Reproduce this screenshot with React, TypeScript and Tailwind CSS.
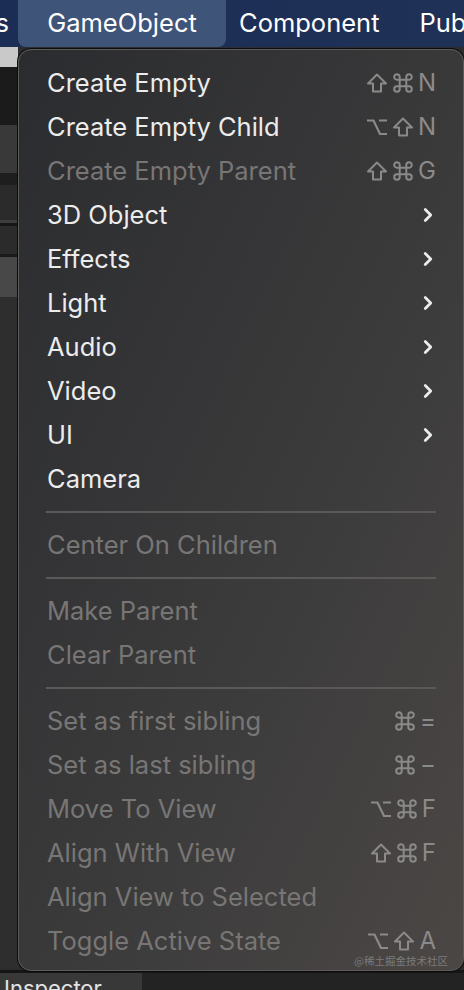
import { ChevronRight } from 'lucide-react';

type Item =
  | { kind: 'sep' }
  | { kind: 'item'; label: string; shortcut?: string[]; submenu?: boolean; disabled?: boolean };

const items: Item[] = [
  { kind: 'item', label: 'Create Empty', shortcut: ['shift', 'cmd', 'N'] },
  { kind: 'item', label: 'Create Empty Child', shortcut: ['opt', 'shift', 'N'] },
  { kind: 'item', label: 'Create Empty Parent', shortcut: ['shift', 'cmd', 'G'], disabled: true },
  { kind: 'item', label: '3D Object', submenu: true },
  { kind: 'item', label: 'Effects', submenu: true },
  { kind: 'item', label: 'Light', submenu: true },
  { kind: 'item', label: 'Audio', submenu: true },
  { kind: 'item', label: 'Video', submenu: true },
  { kind: 'item', label: 'UI', submenu: true },
  { kind: 'item', label: 'Camera' },
  { kind: 'sep' },
  { kind: 'item', label: 'Center On Children', disabled: true },
  { kind: 'sep' },
  { kind: 'item', label: 'Make Parent', disabled: true },
  { kind: 'item', label: 'Clear Parent', disabled: true },
  { kind: 'sep' },
  { kind: 'item', label: 'Set as first sibling', shortcut: ['cmd', '='], disabled: true },
  { kind: 'item', label: 'Set as last sibling', shortcut: ['cmd', '−'], disabled: true },
  { kind: 'item', label: 'Move To View', shortcut: ['opt', 'cmd', 'F'], disabled: true },
  { kind: 'item', label: 'Align With View', shortcut: ['shift', 'cmd', 'F'], disabled: true },
  { kind: 'item', label: 'Align View to Selected', disabled: true },
  { kind: 'item', label: 'Toggle Active State', shortcut: ['opt', 'shift', 'A'], disabled: true },
];

// modifier key glyphs drawn as svg so they match the mac menu size
function KeyGlyph({ k }: { k: string }) {
  if (k === 'shift') {
    return (
      <svg width="22" height="22" viewBox="0 0 22 22" fill="none" stroke="currentColor" strokeWidth="2" strokeLinejoin="round">
        <path d="M11 2.5 L20 11.5 H15 V19.5 H7 V11.5 H2 Z" />
      </svg>
    );
  }
  if (k === 'cmd') {
    return (
      <svg width="22" height="22" viewBox="0 0 20 20" fill="none" stroke="currentColor" strokeWidth="1.8">
        <path d="M7 7 V4.5 A2.5 2.5 0 1 0 4.5 7 H15.5 A2.5 2.5 0 1 0 13 4.5 V15.5 A2.5 2.5 0 1 0 15.5 13 H4.5 A2.5 2.5 0 1 0 7 15.5 Z" />
      </svg>
    );
  }
  if (k === 'opt') {
    return (
      <svg width="22" height="22" viewBox="0 0 22 22" fill="none" stroke="currentColor" strokeWidth="2.2">
        <path d="M1 4.5 H7.5 L14 18 H21 M13 4.5 H21" />
      </svg>
    );
  }
  return <span className="text-[24px] leading-none">{k}</span>;
}

export default function App() {
  return (
    <div className="relative h-[990px] w-[464px] overflow-hidden bg-[#2c2c2c] font-['Inter',sans-serif]">
      {/* top menu bar */}
      <div className="flex h-[47px] items-center overflow-hidden whitespace-nowrap bg-linear-to-r from-[#1c2d55] to-[#1f3157] text-[25.5px] text-white">
        <span className="flex w-[18px] shrink-0 justify-end pr-[9px]">s</span>
        <div className="flex h-full w-[208px] shrink-0 items-center justify-center rounded-b-[8px] bg-[#3f5479]">GameObject</div>
        <span className="ml-[13px] shrink-0">Component</span>
        <span className="ml-[40px] shrink-0">Pub</span>
      </div>

      {/* left editor strip behind menu */}
      <div className="flex w-[18px] flex-col">
        <div className="h-[20px] bg-[#c9c9c9]" />
        <div className="h-[58px] bg-[#1b1b1b]" />
        <div className="h-[48px] bg-[#393939]" />
        <div className="h-[12px] bg-[#1e1e1e]" />
        <div className="h-[35px] bg-[#2b2b2b]" />
        <div className="h-[3px] bg-[#3d3d3d]" />
        <div className="h-[3px] bg-[#161616]" />
        <div className="h-[28px] bg-[#2b2b2b]" />
        <div className="h-[3px] bg-[#1a1a1a]" />
        <div className="h-[40px] bg-[#484848]" />
        <div className="h-[670px] bg-[#2e2e2e]" />
      </div>

      {/* bottom inspector */}
      <div className="absolute bottom-0 left-0 flex h-[20px] w-full border-t-[3px] border-[#151515] bg-[#232323]">
        <div className="w-[142px] bg-[#383838] pl-[4px] text-[22px] leading-[30px] text-[#e4e4e4]">Inspector</div>
      </div>

      {/* dropdown menu */}
      <div className="absolute left-[18px] top-[49px] w-[446px] rounded-[13px] border-[1.5px] border-[#5d5b5a] bg-linear-to-br from-[#2b2c2f] via-[#39393a] to-[#4b4745] pb-[7px] pt-[11px] shadow-[0_0_0_1px_#0c0c0c]">
        {items.map((it, i) =>
          it.kind === 'sep' ? (
            <div key={i} className="flex h-[22px] items-center px-[27px]">
              <div className="h-[2px] w-full bg-[#5b5958]" />
            </div>
          ) : (
            <div key={i} className="flex h-[44px] items-center justify-between pl-[28px] pr-[27px]">
              <span className={`text-[25.5px] ${it.disabled ? 'text-[#787675]' : 'text-[#ececec]'}`}>{it.label}</span>
              {it.shortcut && (
                <span className="flex items-center gap-[4px] text-[#8c8a89]">
                  {it.shortcut.map((k, j) => (
                    <KeyGlyph key={j} k={k} />
                  ))}
                </span>
              )}
              {it.submenu && <ChevronRight size={22} strokeWidth={3} className="mr-[-3px] text-[#ececec]" />}
            </div>
          ),
        )}
        <div className="absolute bottom-[1px] right-[15px] font-['Noto_Sans_CJK_SC',sans-serif] text-[10.5px] text-[#7d7b7a]">@稀土掘金技术社区</div>
      </div>
    </div>
  );
}
